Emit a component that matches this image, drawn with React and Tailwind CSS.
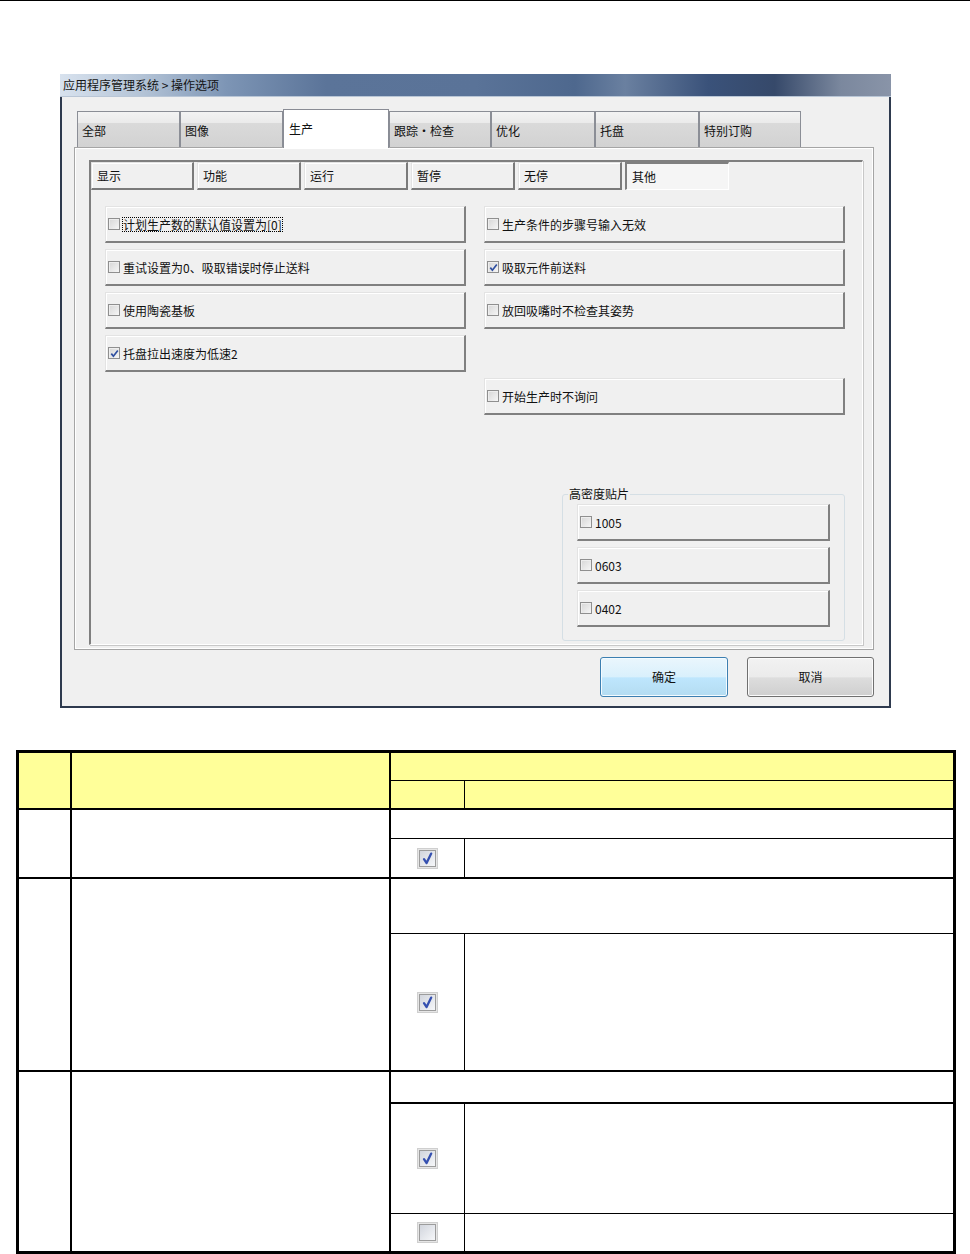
import React from 'react';

const mainTabs = [
  { label: '全部', w: 'w-[103px]' },
  { label: '图像', w: 'w-[103px]' },
  { label: '生产', w: 'w-[106px]', active: true },
  { label: '跟踪・检查', w: 'w-[102px]' },
  { label: '优化', w: 'w-[104px]' },
  { label: '托盘', w: 'w-[104px]' },
  { label: '特别订购', w: 'w-[102px]' },
];

const subTabs = ['显示', '功能', '运行', '暂停', '无停', '其他'];

const leftOptions = [
  { label: '计划生产数的默认值设置为[0]', focus: true },
  { label: '重试设置为0、吸取错误时停止送料' },
  { label: '使用陶瓷基板' },
  { label: '托盘拉出速度为低速2', checked: true },
];

const rightOptions = [
  { label: '生产条件的步骤号输入无效' },
  { label: '吸取元件前送料', checked: true },
  { label: '放回吸嘴时不检查其姿势' },
];

function SmallBox({ checked }) {
  return (
    <span className="flex items-center justify-center w-[12px] h-[12px] shrink-0 border border-[#8f8f8f] bg-[linear-gradient(135deg,#d6d6d6,#f6f6f6)] shadow-[inset_1px_1px_0_#eeeeee]">
      {checked && (
        <svg width="9" height="9" viewBox="0 0 9 9">
          <path d="M1.3 4.6 L3.4 7.2 L7.8 1.4" stroke="#2f4fa0" strokeWidth="1.7" fill="none" />
        </svg>
      )}
    </span>
  );
}

function OptRow({ label, checked, focus }) {
  return (
    <div className="h-[37px] flex items-center gap-[3px] pl-[2px] bg-[#f0f0f0] border-t border-l border-[#e3e3e3] border-r-2 border-b-2 border-r-[#808080] border-b-[#808080] shadow-[inset_1px_1px_0_#ffffff]">
      <SmallBox checked={checked} />
      <span className={focus ? 'outline-1 outline-dotted outline-black leading-[13px]' : 'leading-[13px]'}>{label}</span>
    </div>
  );
}

function TableBox({ checked }) {
  return (
    <svg width="21" height="21" viewBox="0 0 21 21">
      <defs>
        <linearGradient id="tbx" x1="0" y1="0" x2="1" y2="1">
          <stop offset="0" stopColor="#d0d4dc" />
          <stop offset="1" stopColor="#f7f8fa" />
        </linearGradient>
      </defs>
      <rect x="0.5" y="0.5" width="20" height="20" fill="#e6e6e6" stroke="#cfcfcf" />
      <rect x="2.5" y="2.5" width="16" height="16" fill="url(#tbx)" stroke="#9c9c9c" />
      {checked && (
        <path d="M7 11.2 L9.6 15 L14.2 5.6" stroke="#3550b0" strokeWidth="2.3" fill="none" strokeLinecap="round" strokeLinejoin="round" />
      )}
    </svg>
  );
}

function SubCell({ children, className }) {
  return (
    <div className={`flex ${className}`}>
      <div className="w-[74px] border-r border-black flex items-center justify-center">{children}</div>
      <div className="flex-1" />
    </div>
  );
}

export default function App() {
  return (
    <div className="w-[970px] h-[1254px] bg-white border-t border-black overflow-hidden font-['Noto_Sans_CJK_SC','Noto_Sans',sans-serif] text-[12px] text-[#111] leading-none">
      {/* dialog */}
      <div className="ml-[60px] mt-[73px] w-[831px]">
        <div className="h-[23px] flex items-center pl-[3px] text-[#141414] bg-[linear-gradient(to_right,#d8e2ee_0%,#b3c3d6_10%,#7d95b5_20%,#5b7499_32%,#5a7398_50%,#4e688e_62%,#6a80a0_68%,#3a527a_78%,#36496a_86%,#7b889e_94%,#8994a8_100%)] border-b border-[#b9c6d6]">
          应用程序管理系统 &gt; 操作选项
        </div>
        <div className="h-[611px] bg-[#f0f0f0] border-l-2 border-r-2 border-b-2 border-[#2e3a4e] pl-[12px] pt-[12px]">
          {/* main tabs */}
          <div className="relative z-10 flex items-end h-[39px] -mb-px pl-[3px]">
            {mainTabs.map((t) =>
              t.active ? (
                <div key={t.label} className={`${t.w} h-[39px] bg-white border-l border-t border-r border-[#898c95] pl-[5px] pt-[12px] leading-[14px]`}>
                  {t.label}
                </div>
              ) : (
                <div key={t.label} className={`${t.w} h-[36px] mb-px bg-[linear-gradient(#f3f3f3_0%,#ebebeb_30%,#dadada_32%,#d2d2d2_100%)] border-l border-t border-r border-[#8b8e96] pl-[4px] pt-[12px] leading-[14px]`}>
                  {t.label}
                </div>
              )
            )}
          </div>
          {/* tab panel */}
          <div className="w-[800px] h-[503px] border border-[#a5a5a5] bg-[#f0f0f0] shadow-[inset_1px_1px_0_#ffffff,inset_-1px_-1px_0_#ffffff] pl-[14px] pt-[12px]">
            <div className="w-[774px] h-[485px] border-t-2 border-l-2 border-[#7f7f7f] border-r border-b border-r-[#ffffff] border-b-[#ffffff] shadow-[1px_1px_0_#c8c8c8]">
              {/* sub tabs */}
              <div className="flex gap-[3px]">
                {subTabs.map((s, i) =>
                  s === '其他' ? (
                    <div key={s} className="w-[104px] h-[28px] flex items-center pl-[5px] border-t-2 border-l-2 border-[#7f7f7f] border-r border-b border-r-white border-b-white bg-[#f5f5f5]">
                      {s}
                    </div>
                  ) : (
                    <div key={s} className={`${i === 0 ? 'w-[103px]' : 'w-[104px]'} h-[28px] flex items-center pl-[5px] bg-[#f0f0f0] border-t border-l border-[#e3e3e3] border-r-2 border-b-2 border-r-[#7a7a7a] border-b-[#7a7a7a] shadow-[inset_1px_1px_0_#ffffff]`}>
                      {s}
                    </div>
                  )
                )}
              </div>
              {/* option columns */}
              <div className="flex gap-[18px] ml-[14px] mt-[16px]">
                <div className="w-[361px] flex flex-col gap-[6px]">
                  {leftOptions.map((o) => (
                    <OptRow key={o.label} {...o} />
                  ))}
                </div>
                <div className="w-[361px] flex flex-col">
                  <div className="flex flex-col gap-[6px]">
                    {rightOptions.map((o) => (
                      <OptRow key={o.label} {...o} />
                    ))}
                    <div className="h-[37px]" />
                    <OptRow label="开始生产时不询问" />
                  </div>
                  <fieldset className="ml-auto mt-[72px] w-[283px] border border-[#d5dfe5] rounded-[3px]">
                    <legend className="ml-[5px] px-px leading-[14px]">高密度贴片</legend>
                    <div className="mt-[3px] px-[14px] pb-[13px] flex flex-col gap-[6px]">
                      <OptRow label="1005" />
                      <OptRow label="0603" />
                      <OptRow label="0402" />
                    </div>
                  </fieldset>
                </div>
              </div>
            </div>
          </div>
          {/* buttons */}
          <div className="w-[800px] flex justify-end gap-[19px] mt-[7px]">
            <button className="w-[128px] h-[40px] rounded-[3px] border border-[#3c7fb1] bg-[linear-gradient(#eaf6fd_0%,#d9f0fc_50%,#bee6fd_52%,#b4dcf1_100%)] shadow-[inset_0_0_0_1px_#f4fbff] text-[12px] text-[#111]">
              确定
            </button>
            <button className="w-[127px] h-[40px] rounded-[3px] border border-[#707070] bg-[linear-gradient(#f2f2f2_0%,#ebebeb_50%,#dddddd_52%,#cfcfcf_100%)] shadow-[inset_0_0_0_1px_#fbfbfb] text-[12px] text-[#111]">
              取消
            </button>
          </div>
        </div>
      </div>

      {/* table */}
      <div className="ml-[16px] mt-[42px] w-[940px] h-[504px] border-[3px] border-black flex flex-col">
        <div className="h-[57px] flex bg-[#ffff99] border-b-2 border-black">
          <div className="w-[53px] border-r-2 border-black" />
          <div className="w-[319px] border-r-2 border-black" />
          <div className="flex-1 flex flex-col">
            <div className="h-[28px] border-b border-black" />
            <SubCell className="flex-1" />
          </div>
        </div>
        <div className="h-[69px] flex border-b-2 border-black">
          <div className="w-[53px] border-r-2 border-black" />
          <div className="w-[319px] border-r-2 border-black" />
          <div className="flex-1 flex flex-col">
            <div className="h-[29px] border-b border-black" />
            <SubCell className="flex-1">
              <TableBox checked />
            </SubCell>
          </div>
        </div>
        <div className="h-[193px] flex border-b-2 border-black">
          <div className="w-[53px] border-r-2 border-black" />
          <div className="w-[319px] border-r-2 border-black" />
          <div className="flex-1 flex flex-col">
            <div className="h-[55px] border-b border-black" />
            <SubCell className="flex-1">
              <TableBox checked />
            </SubCell>
          </div>
        </div>
        <div className="flex-1 flex">
          <div className="w-[53px] border-r-2 border-black" />
          <div className="w-[319px] border-r-2 border-black" />
          <div className="flex-1 flex flex-col">
            <div className="h-[32px] border-b-2 border-black" />
            <SubCell className="h-[110px] border-b border-black">
              <TableBox checked />
            </SubCell>
            <SubCell className="flex-1">
              <TableBox />
            </SubCell>
          </div>
        </div>
      </div>
    </div>
  );
}
